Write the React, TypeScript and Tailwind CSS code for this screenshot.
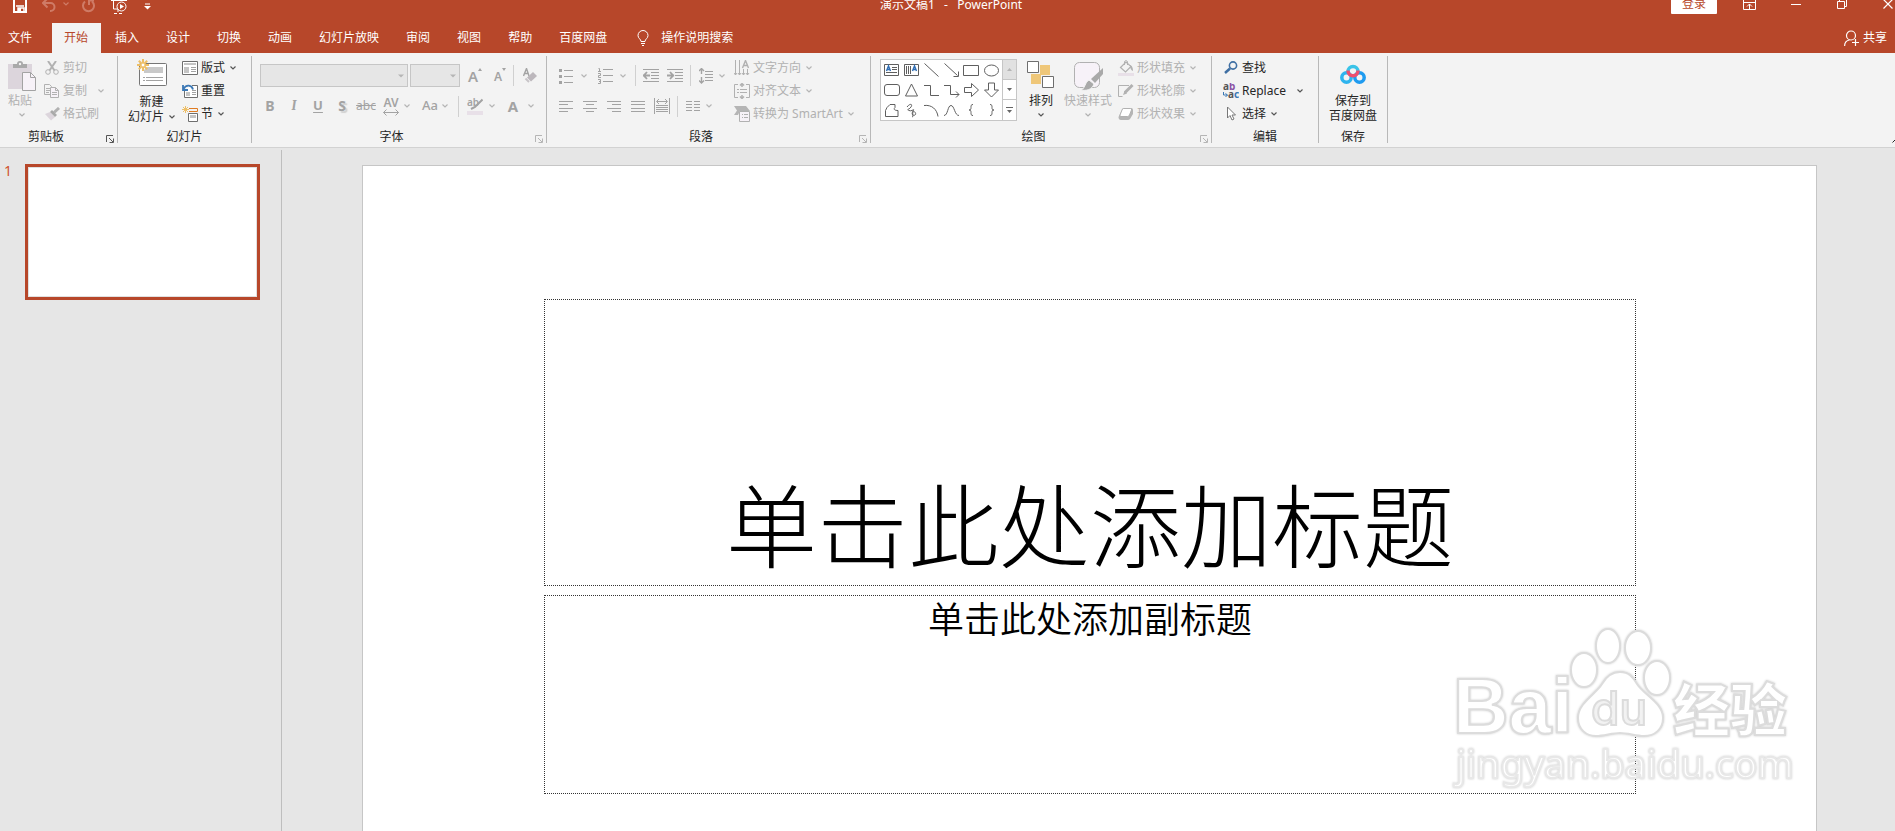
import type {ReactNode} from "react";
import clsx from "clsx";

const TABS = ["插入", "设计", "切换", "动画", "幻灯片放映", "审阅", "视图", "帮助", "百度网盘"];

type IconProps = {
  w: number;
  h: number;
  children: ReactNode;
  className?: string;
};

function Icon({w, h, children, className}: IconProps) {
  return (
    <svg
      width={w}
      height={h}
      viewBox={`0 0 ${w} ${h}`}
      fill="none"
      stroke="currentColor"
      aria-hidden="true"
      className={clsx("block shrink-0", className)}
    >
      {children}
    </svg>
  );
}

function Chevron({className}: {className?: string}) {
  return (
    <Icon w={6} h={4} className={className}>
      <path d="M.5 .5 3 3 5.5 .5" strokeWidth="1.2" />
    </Icon>
  );
}

function Divider({className}: {className?: string}) {
  return <span className={clsx("h-[21px] w-px shrink-0 bg-[#d0d0d0]", className)} />;
}

type GroupProps = {
  label: string;
  className: string;
  labelClassName?: string;
  launcher?: "on" | "off";
  children: ReactNode;
};

function Group({label, className, labelClassName, launcher, children}: GroupProps) {
  return (
    <section aria-label={label} className={clsx("flex shrink-0 flex-col border-r border-[#b8b8b8]", className)}>
      <div className="flex flex-1 items-start">{children}</div>
      <div className="flex h-[13px] items-center">
        <span className={clsx("flex-1 text-center leading-[13px]", labelClassName)}>{label}</span>
        {launcher ? (
          <button
            type="button"
            aria-label={`${label}设置`}
            disabled={launcher === "off"}
            className={clsx("w-[11px] pt-1", launcher === "on" ? "text-[#555]" : "text-[#b5b5b5]")}
          >
            <Icon w={8} h={8}>
              <path d="M.5 7V.5H7M3 3l4 4M7.5 3.5v4h-4" />
            </Icon>
          </button>
        ) : null}
      </div>
    </section>
  );
}

type RowProps = {
  icon: ReactNode;
  label: string;
  disabled?: boolean;
  chevron?: "near" | "far";
};

function Row({icon, label, disabled, chevron}: RowProps) {
  return (
    <button
      type="button"
      disabled={disabled}
      className="flex h-[23px] items-center gap-[3px] whitespace-nowrap disabled:text-[#b1b1b1]"
    >
      <span className="flex w-4 justify-center">{icon}</span>
      <span>{label}</span>
      {chevron ? (
        <Chevron className={clsx(chevron === "far" ? "ml-2" : "ml-0.5", disabled ? "text-[#b5b5b5]" : "text-[#555]")} />
      ) : null}
    </button>
  );
}

type ToolProps = {
  label: string;
  className?: string;
  children: ReactNode;
};

function Tool({label, className, children}: ToolProps) {
  return (
    <button
      type="button"
      disabled
      aria-label={label}
      className={clsx("flex h-[22px] shrink-0 items-center justify-center text-[#a3a3a3]", className)}
    >
      {children}
    </button>
  );
}

function ComboBox({label, className}: {label: string; className: string}) {
  return (
    <div className={clsx("relative", className)}>
      <select
        disabled
        aria-label={label}
        className="block h-[23px] w-full appearance-none border border-[#c6c6c6] bg-[#e6e6e6]"
      />
      <Icon w={6} h={4} className="absolute top-2.5 right-1 text-[#b5b5b5]">
        <path d="M0 .5h6L3 3.5z" fill="currentColor" stroke="none" />
      </Icon>
    </div>
  );
}

function TitleBar() {
  return (
    <header className="-mt-3 mb-[3px] flex h-8 items-center justify-between text-white">
      <div className="flex flex-1 items-center pl-[13px]">
        <button type="button" aria-label="保存">
          <Icon w={14} h={18}>
            <path d="M1 3h12v14H1z" strokeWidth="2" />
            <path d="M3 11h8M5 17v-4h6v4" strokeWidth="1.5" />
            <path d="M5 13h3v4H5z" fill="currentColor" stroke="none" />
          </Icon>
        </button>
        <button type="button" aria-label="撤消" disabled className="ml-[15px] flex items-center text-[#cf7b66]">
          <Icon w={14} h={18}>
            <path d="M1 8h7.500a4 4 0 0 1 0 8H8M5.500 3.500 1 8l4.500 4.500" strokeWidth="2" />
          </Icon>
          <Chevron className="ml-[7px]" />
        </button>
        <button type="button" aria-label="恢复" disabled className="ml-[12px] text-[#cf7b66]">
          <Icon w={14} h={18}>
            <path d="M11 6.500a5.500 5.500 0 1 1-7 0M8 10V5.500h5" strokeWidth="2" />
          </Icon>
        </button>
        <button type="button" aria-label="从头开始" className="ml-4">
          <Icon w={16} h={20}>
            <path d="M0 6.500h16M2.500 6v9H7M7 15v3M3 19.500h3M8 19.500h3" />
            <circle cx="10.500" cy="12.500" r="4.500" />
            <path d="M9 10v5l4-2.500z" fill="currentColor" stroke="none" />
          </Icon>
        </button>
        <button type="button" aria-label="自定义快速访问工具栏" className="ml-[17px] pt-1">
          <Icon w={7} h={7}>
            <path d="M1 1h5" />
            <path d="M0 3h7L3.500 6.500z" fill="currentColor" stroke="none" />
          </Icon>
        </button>
      </div>
      <h1 className="pt-0.5 pr-1.5 leading-4 whitespace-pre">演示文稿1   -   PowerPoint</h1>
      <div className="flex flex-1 items-center justify-end">
        <button type="button" className="h-5 w-[46px] rounded-[1px] bg-white text-[#b7472a]">
          登录
        </button>
        <button type="button" aria-label="功能区显示选项" className="ml-[26px]">
          <Icon w={13} h={12}>
            <path d="M.5 1.500h12v10H.5zM.5 4.500h12M6.500 11V6M4 8.500l2.500-2.500L9 8.500" />
          </Icon>
        </button>
        <button type="button" aria-label="最小化" className="ml-[35px]">
          <Icon w={10} h={10}>
            <path d="M0 5.500h10" />
          </Icon>
        </button>
        <button type="button" aria-label="向下还原" className="ml-9">
          <Icon w={10} h={10}>
            <path d="M.5 2.500h7v7h-7zM2.500 2.500v-2h7v7h-2" />
          </Icon>
        </button>
        <button type="button" aria-label="关闭" className="mr-0.5 ml-9">
          <Icon w={10} h={10}>
            <path d="m.5.5 9 9M9.500.5l-9 9" strokeWidth="1.200" />
          </Icon>
        </button>
      </div>
    </header>
  );
}

function TabBar() {
  return (
    <nav className="flex h-[30px] items-stretch text-white">
      <button type="button" className="w-[52px] pl-2 text-left">
        文件
      </button>
      <div className="flex gap-px">
        <button type="button" aria-current="page" className="bg-[#f3f3f3] pr-[13px] pl-3 text-[#b7472a]">
          开始
        </button>
        {TABS.map((tab) => (
          <button key={tab} type="button" className="px-[13px]">
            {tab}
          </button>
        ))}
      </div>
      <button type="button" className="ml-[17px] flex items-center gap-3">
        <Icon w={12} h={16}>
          <path d="M4 11.500C4 9 1 8.500 1 5.500a5 5 0 0 1 10 0C11 8.500 8 9 8 11.500zM4 13.500h4M5 15.500h2" />
        </Icon>
        操作说明搜索
      </button>
      <button type="button" className="mr-2 ml-auto flex items-center gap-1">
        <Icon w={15} h={16}>
          <circle cx="7" cy="5.500" r="4.500" strokeWidth="1.200" />
          <path d="M.6 16c0-3 2-5.500 5-6" strokeWidth="1.200" />
          <path d="M8 12.500h7M11.500 9v7" strokeWidth="1.200" />
        </Icon>
        共享
      </button>
    </nav>
  );
}

function ClipboardGroup() {
  return (
    <Group label="剪贴板" className="w-[118px]" labelClassName="pr-3.5" launcher="on">
      <button type="button" disabled className="flex w-11 flex-col items-start pt-[5px] pl-2 text-[#b1b1b1]">
        <Icon w={28} h={30}>
          <path d="M0 3h24v25H0z" fill="#dcd5dc" stroke="none" />
          <path d="M5 7V3h4a3 3 0 0 1 6 0h4v4z" fill="#a9a9a9" stroke="none" />
          <circle cx="12" cy="3" r="1.200" fill="#f3f3f3" stroke="none" />
          <path d="M14.500 11.500h8l5 5v13h-13z" fill="#f7f2f8" stroke="#a3a3a3" />
          <path d="M22.500 11.500v5h5" stroke="#a3a3a3" />
        </Icon>
        <span className="mt-0.5 leading-4">粘贴</span>
        <Chevron className="mt-1 ml-[11px]" />
      </button>
      <div>
        <Row
          disabled
          label="剪切"
          icon={
            <Icon w={14} h={14}>
              <path d="M3 0l6.500 9.500M11 0 4.500 9.500" strokeWidth="2" />
              <circle cx="3" cy="11" r="2.300" />
              <circle cx="11" cy="11" r="2.300" />
            </Icon>
          }
        />
        <Row
          disabled
          label="复制"
          chevron="far"
          icon={
            <Icon w={16} h={14}>
              <path d="M.5.5h5l2 2v8h-7zM2 4.500h4M2 6.500h4M2 8.500h3" />
              <path d="M6.500 3.500h5l3 3v7h-8z" fill="#f7f2f8" />
              <path d="M11.500 3.500v3h3M8 8.500h5M8 10.500h5" />
            </Icon>
          }
        />
        <Row
          disabled
          label="格式刷"
          icon={
            <Icon w={15} h={14}>
              <path d="M0 7l5-2 5 5-4 3.500z" fill="#dcd5dc" stroke="none" />
              <path d="M5 5l2-2 5 5-2 2z" fill="#a9a9a9" stroke="none" />
              <path d="M9 5.500 14 1" strokeWidth="3" />
            </Icon>
          }
        />
      </div>
    </Group>
  );
}

function SlidesGroup() {
  return (
    <Group label="幻灯片" className="w-[134px]">
      <button type="button" className="ml-2.5 flex flex-col items-center pt-[3px]">
        <Icon w={30} h={28}>
          <rect x="2.500" y="4.500" width="27" height="22" rx="1" fill="#fff" stroke="#767676" />
          <path d="M10 8h16v6H7v-3z" fill="#c9c9c9" stroke="none" />
          <path d="M6 18.500h2M9 18.500h17M6 21.500h2M9 21.500h17" stroke="#a3a3a3" />
          <path
            d="M6 0v12M0 6h12M1.800 1.800l8.400 8.400M10.200 1.800l-8.400 8.400"
            stroke="#eebf66"
            strokeWidth="2"
          />
          <circle cx="6" cy="6" r="2" fill="#fff" stroke="#eebf66" />
        </Icon>
        <span className="mt-[7px] leading-[15px]">新建</span>
        <span className="flex items-center gap-[5px] leading-[15px]">
          幻灯片
          <Chevron className="text-[#555]" />
        </span>
      </button>
      <div className="ml-[7px]">
        <Row
          label="版式"
          chevron="near"
          icon={
            <Icon w={16} h={14}>
              <path d="M.5.5h15v13H.5z" fill="#fff" stroke="#6e6e6e" />
              <path d="M2 2h12v2H2zM2 6h5v6H2z" fill="#c4c4c4" stroke="none" />
              <path d="M9 6.500h5M9 8.500h5M9 10.500h5" stroke="#a3a3a3" />
            </Icon>
          }
        />
        <Row
          label="重置"
          icon={
            <Icon w={16} h={14}>
              <path d="M2.500 6v7.500h13v-12H10" fill="#fff" stroke="#6e6e6e" />
              <path d="M4 8h4v4H4z" fill="#c4c4c4" stroke="none" />
              <path d="M10 6.500h4M10 8.500h4M10 10.500h4" stroke="#a3a3a3" />
              <path d="M11 5.500C10 1 4 0 1.500 5M1 1v5h5" stroke="#3b78b5" strokeWidth="1.800" />
            </Icon>
          }
        />
        <Row
          label="节"
          chevron="near"
          icon={
            <Icon w={16} h={16}>
              <path d="M7 2.500h8.500v3H7" stroke="#e07b20" />
              <path d="M6.500 7.500h9v8h-9z" fill="#fff" stroke="#6e6e6e" />
              <path d="M8 9h6v3H8z" fill="#c4c4c4" stroke="none" />
              <path d="M3.500 0v7M0 3.500h7M1 1l5 5M6 1 1 6" stroke="#eebf66" />
            </Icon>
          }
        />
      </div>
    </Group>
  );
}

function FontGroup() {
  return (
    <Group label="字体" className="w-[295px]" labelClassName="pr-1" launcher="off">
      <div className="pt-2 pl-1.5">
        <div className="flex items-center">
          <ComboBox label="字体名称" className="ml-0.5 w-[148px]" />
          <ComboBox label="字号" className="ml-0.5 w-[50px]" />
          <Tool label="增大字号" className="ml-2">
            <span className="text-[15px] leading-4 font-semibold">A</span>
            <Icon w={4} h={16}>
              <path d="M0 3 2 0l2 3z" fill="currentColor" stroke="none" />
            </Icon>
          </Tool>
          <Tool label="减小字号" className="ml-3">
            <span className="pt-0.5 leading-4 font-semibold">A</span>
            <Icon w={4} h={16}>
              <path d="M0 0h4L2 3z" fill="currentColor" stroke="none" />
            </Icon>
          </Tool>
          <Divider className="ml-[7px]" />
          <Tool label="清除格式" className="ml-[9px]">
            <Icon w={14} h={15}>
              <path d="M.5 8 3.500.5 6 8M1.500 5.500h4" strokeWidth="1.400" />
              <path d="M4 9.500 10 4l4 4-6 5.500z" fill="#bcb7bc" stroke="none" />
              <path d="M2.500 10.500 6 14" stroke="#c8c4c8" strokeWidth="2" />
            </Icon>
          </Tool>
        </div>
        <div className="mt-2 flex items-center">
          <Tool label="加粗" className="w-6 text-sm font-bold">
            B
          </Tool>
          <Tool label="倾斜" className="w-6 font-serif text-sm font-bold italic">
            I
          </Tool>
          <Tool label="下划线" className="w-6 text-[13px] font-bold underline underline-offset-2">
            U
          </Tool>
          <Tool label="文字阴影" className="w-6 text-sm font-bold text-shadow-[2px_2px_1px_#d0d0d0]">
            S
          </Tool>
          <Tool label="删除线" className="w-6 line-through">
            abc
          </Tool>
          <Tool label="字符间距" className="w-[26px] flex-col">
            <span className="leading-3 font-semibold">AV</span>
            <Icon w={16} h={7}>
              <path d="M.5 3.500h15M3.500.5l-3 3 3 3M12.500.5l3 3-3 3" />
            </Icon>
          </Tool>
          <Chevron className="text-[#b5b5b5]" />
          <Tool label="更改大小写" className="ml-2 w-6 text-[13px] font-medium">
            Aa
          </Tool>
          <Chevron className="text-[#b5b5b5]" />
          <Divider className="ml-2.5" />
          <Tool label="文本突出显示颜色" className="ml-2">
            <Icon w={16} h={17}>
              <text x="0" y="8" fontSize="10" fontWeight="600" fill="currentColor" stroke="none">
                ab
              </text>
              <path d="M15.500 1.500 8 9l-4 2" strokeWidth="2" />
              <path d="M0 13h16v4H0z" fill="#e8e0e8" stroke="none" />
            </Icon>
          </Tool>
          <Chevron className="ml-1.5 text-[#b5b5b5]" />
          <Tool label="字体颜色" className="ml-3 w-3 text-[15px] font-bold">
            A
          </Tool>
          <Chevron className="ml-[9px] text-[#b5b5b5]" />
        </div>
      </div>
    </Group>
  );
}

function ParagraphGroup() {
  return (
    <Group label="段落" className="w-[324px]" labelClassName="pr-1" launcher="off">
      <div className="ml-3 w-[166px] shrink-0 pt-2">
        <div className="flex h-[23px] items-center">
          <Tool label="项目符号">
            <Icon w={14} h={16}>
              <path d="M5 2.500h9M5 8.500h9M5 14.500h9" />
              <path d="M0 1h3v3H0zM0 7h3v3H0zM0 13h3v3H0z" fill="currentColor" stroke="none" />
            </Icon>
          </Tool>
          <Chevron className="ml-2 text-[#b5b5b5]" />
          <Tool label="编号" className="ml-[11px]">
            <Icon w={15} h={17}>
              <path d="M5 2.500h10M5 8.500h10M5 14.500h10" />
              <path d="M.5 1.500h1v3M0 4.500h3M0 6.500h2.500v2h-2v2H3M0 12.500h2.500v4H0M1 14.500h1" />
            </Icon>
          </Tool>
          <Chevron className="ml-[7px] text-[#b5b5b5]" />
          <Divider className="ml-[9px]" />
          <Tool label="降低列表级别" className="ml-[7px]">
            <Icon w={16} h={14}>
              <path d="M0 .5h16M8 3.500h8M8 6.500h8M8 9.500h8M0 12.500h16" />
              <path d="M0 6.500h7M4 3 .8 6.500 4 10" strokeWidth="1.800" />
            </Icon>
          </Tool>
          <Tool label="提高列表级别" className="ml-2">
            <Icon w={16} h={14}>
              <path d="M0 .5h16M8 3.500h8M8 6.500h8M8 9.500h8M0 12.500h16" />
              <path d="M0 6.500h7M3 3l3.200 3.500L3 10" strokeWidth="1.800" />
            </Icon>
          </Tool>
          <Divider className="ml-[7px]" />
          <Tool label="行距" className="ml-2">
            <Icon w={14} h={16}>
              <path d="M6 3.500h8M6 6.500h8M6 9.500h8M6 12.500h8" />
              <path d="M2.500 0v6M0 3 2.500.5 5 3M2.500 9v6M0 12.500 2.500 15 5 12.500" strokeWidth="1.400" />
            </Icon>
          </Tool>
          <Chevron className="ml-1.5 text-[#b5b5b5]" />
        </div>
        <div className="mt-2 flex items-center">
          <Tool label="左对齐">
            <Icon w={14} h={11}>
              <path d="M0 .5h14M0 3.500h9M0 7.500h14M0 10.500h9" />
            </Icon>
          </Tool>
          <Tool label="居中" className="ml-2.5">
            <Icon w={14} h={11}>
              <path d="M0 .5h14M3 3.500h8M0 7.500h14M3 10.500h8" />
            </Icon>
          </Tool>
          <Tool label="右对齐" className="ml-2.5">
            <Icon w={14} h={11}>
              <path d="M0 .5h14M5 3.500h9M0 7.500h14M5 10.500h9" />
            </Icon>
          </Tool>
          <Tool label="两端对齐" className="ml-2.5">
            <Icon w={14} h={11}>
              <path d="M0 .5h14M0 3.500h14M0 7.500h14M0 10.500h14" />
            </Icon>
          </Tool>
          <Tool label="分散对齐" className="ml-[9px]">
            <Icon w={16} h={16}>
              <path d="M.5 0v16M15.500 0v16M3 3.500h10M5 1 2.500 3.500 5 6M11 1l2.500 2.500L11 6" />
              <path d="M2 7.500h12M2 9.500h12M2 11.500h12M2 13.500h12" />
            </Icon>
          </Tool>
          <Divider className="ml-[7px]" />
          <Tool label="分栏" className="ml-2">
            <Icon w={14} h={11}>
              <path d="M0 .5h6M8 .5h6M0 3.500h6M8 3.500h6M0 6.500h6M8 6.500h6M0 9.500h6M8 9.500h6" />
            </Icon>
          </Tool>
          <Chevron className="ml-1.5 text-[#b5b5b5]" />
        </div>
      </div>
      <div className="ml-[9px]">
        <Row
          disabled
          label="文字方向"
          chevron="near"
          icon={
            <Icon w={16} h={16}>
              <path d="M1.500 0v15M5.500 0v15M9.500 9v6M13.500 9v6M0 13l1.500 2L3 13M4 13l1.500 2L7 13M8 13l1.500 2 1.500-2M12 13l1.500 2 1.500-2" />
              <path d="M8.500 8 11.500.5l3 7.500M9.500 5.500h4" strokeWidth="1.400" />
            </Icon>
          }
        />
        <Row
          disabled
          label="对齐文本"
          chevron="near"
          icon={
            <Icon w={16} h={16}>
              <path d="M4 1.500H.5v13H4M12 1.500h3.500v13H12M3 6.500h2M6 6.500h7M3 9.500h2M6 9.500h7" />
              <path d="M8 0v4M6 2.500 8 .5l2 2M8 12v4M6 13.500l2 2 2-2" strokeWidth="1.500" />
            </Icon>
          }
        />
        <Row
          disabled
          label="转换为 SmartArt"
          chevron="near"
          icon={
            <Icon w={16} h={16}>
              <path d="M0 0h12l4 5H6l-2 4H0l3-4.500z" fill="#b5b5b5" stroke="none" />
              <path d="M5.500 5.500h10v10h-10z" fill="#f7f2f8" />
              <path d="M8 8.500h1M10 8.500h4M8 11.500h1M10 11.500h4" />
            </Icon>
          }
        />
      </div>
    </Group>
  );
}

const SHAPES: {name: string; draw: ReactNode}[] = [
  {
    name: "文本框",
    draw: (
      <>
        <path d="M.5 1.500h14v11H.5zM8 4.500h5M8 6.500h5M2 9.500h11" />
        <path d="M2.500 8 4.500 3l2 5M3 6.500h3" stroke="#2f6eb5" strokeWidth="1.400" />
      </>
    ),
  },
  {
    name: "竖排文本框",
    draw: (
      <>
        <path d="M.5 1.500h14v11H.5zM2.500 3v8M4.500 3v8M6.500 3v8" />
        <path d="M8.500 8l2-5 2 5M9 6.500h3" stroke="#2f6eb5" strokeWidth="1.400" />
      </>
    ),
  },
  {name: "直线", draw: <path d="M.5.5l14 13" />},
  {name: "箭头", draw: <path d="M.5.5l13 12M14.500 8.500v5h-5" />},
  {name: "矩形", draw: <path d="M-.5 2.500h15v10h-15z" />},
  {name: "椭圆", draw: <ellipse cx="7.500" cy="7.500" rx="7" ry="5.500" />},
  {name: "圆角矩形", draw: <rect x=".5" y="1.500" width="15" height="11" rx="2.500" />},
  {name: "三角形", draw: <path d="M7.500 1 1.500 13h12z" />},
  {name: "肘形连接符", draw: <path d="M0 2.500h6.500v10H15" />},
  {name: "肘形箭头", draw: <path d="M0 2.500h6.500v9H15M12 8.500l3 3-3 3" />},
  {name: "右箭头", draw: <path d="M.5 4.500h7v-4l7 6.500-7 6.500v-4h-7z" />},
  {name: "下箭头", draw: <path d="M4.500 0h6v7h4l-7 7-7-7h4z" />},
  {name: "任意多边形", draw: <path d="M3 4.500 6 1.500h5v3c-2 2 0 3 3 3v6H1.500v-6z" />},
  {
    name: "自由曲线",
    draw: <path d="M3 4c3-4 6-3 4 0S2 6 5 7.500s6-3 4 .5 0 5 2 4-1-5-2-3 1 5-1 5" />,
  },
  {name: "弧形", draw: <path d="M0 2.500c8-1 13 4 14 11" />},
  {name: "曲线", draw: <path d="M0 12.500c4 0 3.500-10 7-10s3.500 10 8 10" />},
  {name: "左大括号", draw: <path d="M9 1.500c-2 0-2 1-2 3s-.5 2.500-2 2.500c1.500 0 2 .5 2 2.500s0 3 2 3" />},
  {name: "右大括号", draw: <path d="M6 1.500c2 0 2 1 2 3S8.500 7 10 7c-1.500 0-2 .5-2 2.500s0 3-2 3" />},
];

function DrawingGroup() {
  return (
    <Group label="绘图" className="w-[341px]" labelClassName="pr-1" launcher="off">
      <div className="mt-[3px] ml-[9px] flex h-[62px] w-[137px] shrink-0 border border-[#c6c6c6] bg-white">
        <div className="grid flex-1 grid-cols-6 text-[#5f5f5f]">
          {SHAPES.map((shape) => (
            <button key={shape.name} type="button" aria-label={shape.name} className="flex items-center justify-center">
              <Icon w={15} h={14} className="overflow-visible">
                {shape.draw}
              </Icon>
            </button>
          ))}
        </div>
        <div className="grid w-3.5 grid-rows-3 divide-y divide-[#c6c6c6] border-l border-[#c6c6c6] text-[#666]">
          <button
            type="button"
            aria-label="上一行"
            disabled
            className="flex items-center justify-center bg-[#e1e1e1] text-[#b5b5b5]"
          >
            <Icon w={5} h={3}>
              <path d="M0 3h5L2.500 0z" fill="currentColor" stroke="none" />
            </Icon>
          </button>
          <button type="button" aria-label="下一行" className="flex items-center justify-center">
            <Icon w={5} h={3}>
              <path d="M0 0h5L2.500 3z" fill="currentColor" stroke="none" />
            </Icon>
          </button>
          <button type="button" aria-label="其他形状" className="flex items-center justify-center">
            <Icon w={7} h={7}>
              <path d="M0 .5h7" />
              <path d="M1 3h5L3.500 6z" fill="currentColor" stroke="none" />
            </Icon>
          </button>
        </div>
      </div>
      <button type="button" className="ml-2.5 flex w-7 flex-col items-center pt-[5px]">
        <Icon w={28} h={28}>
          <path d="M13 4h10v10H13zM4 13h10v10H4z" fill="#efc779" stroke="none" />
          <path d="M.5.5h11v11H.5zM15.500 15.500h11v11h-11z" fill="#fff" stroke="#6e6e6e" />
        </Icon>
        <span className="mt-1 leading-4">排列</span>
        <Chevron className="mt-1 text-[#555]" />
      </button>
      <button type="button" disabled className="ml-[9px] flex w-12 shrink-0 flex-col items-center pt-[5px] text-[#b1b1b1]">
        <Icon w={30} h={30}>
          <rect x="1.500" y="1.500" width="25" height="25" rx="5" fill="#f7f2f8" />
          <path d="M30 7v6l-8 9-4-4z" fill="#a9a9a9" stroke="none" />
          <path d="M16 19l5 4c-2 6-8 7-13 6 4-1 4-8 8-10z" fill="#a9a9a9" stroke="#f3f3f3" />
        </Icon>
        <span className="mt-0.5 leading-4">快速样式</span>
        <Chevron className="mt-1" />
      </button>
      <div className="ml-1.5">
        <Row
          disabled
          label="形状填充"
          chevron="near"
          icon={
            <Icon w={16} h={16}>
              <path d="M2.500 7.500 8 2l5 4.500-5.500 5.500z" strokeWidth="1.200" />
              <path d="M6.500 5V1.500q1.500-2 3 0V5" />
              <path d="M12 5q3 1 3 6-3-1-3-6z" fill="currentColor" stroke="none" />
              <path d="M0 13h16v3H0z" fill="#e8e0e8" stroke="none" />
            </Icon>
          }
        />
        <Row
          disabled
          label="形状轮廓"
          chevron="near"
          icon={
            <Icon w={16} h={16}>
              <path d="M11 2.500H.5v11h4" />
              <path d="M14.500 2 7 9.500" strokeWidth="3" />
              <path d="M6.500 8 5 12l4-1.500z" fill="currentColor" stroke="none" />
            </Icon>
          }
        />
        <Row
          disabled
          label="形状效果"
          chevron="near"
          icon={
            <Icon w={16} h={14}>
              <path d="M5 1h8q2 0 2 2v4l-3 5q-1 1-2 1H3q-2.500 0-2.500-3z" fill="#b5b5b5" stroke="none" />
              <path
                d="M5.500 1.500h7q1.500 0 1 1.500l-2 5q-.5 1.500-2 1.500H3q-1.500 0-1-1.500l2-5q.5-1.500 1.500-1.500z"
                fill="#fff"
              />
            </Icon>
          }
        />
      </div>
    </Group>
  );
}

function EditGroup() {
  return (
    <Group label="编辑" className="w-[107px]">
      <div className="pl-[11px]">
        <Row
          label="查找"
          icon={
            <Icon w={14} h={13}>
              <circle cx="9" cy="4.500" r="3.600" stroke="#3f6fa3" strokeWidth="1.600" />
              <path d="M6 7.500 1 12" stroke="#3f6fa3" strokeWidth="2.500" />
            </Icon>
          }
        />
        <Row
          label="Replace"
          chevron="far"
          icon={
            <Icon w={16} h={16}>
              <text fontSize="10" fontWeight="700" stroke="none">
                <tspan x="0" y="7" fill="#555">
                  a
                </tspan>
                <tspan fill="#8b53a5">b</tspan>
                <tspan x="5" y="15" fill="#555">
                  a
                </tspan>
                <tspan fill="#3b78b5">c</tspan>
              </text>
              <path d="M.5 9v3h4M2.500 10.500l2 1.500-2 2" stroke="#3b78b5" />
            </Icon>
          }
        />
        <Row
          label="选择"
          chevron="near"
          icon={
            <Icon w={9} h={15}>
              <path d="M.5 1v11l2.500-2.500L5 14l2-1-2-4h3.500z" fill="#fff" stroke="#777" />
            </Icon>
          }
        />
      </div>
    </Group>
  );
}

function CloudGroup() {
  return (
    <Group label="保存" className="w-[69px]">
      <button type="button" className="flex flex-1 flex-col items-center pt-[7px]">
        <Icon w={26} h={21}>
          <path d="M8 8.500a5 5 0 1 1 10 0" stroke="#3ac3e8" strokeWidth="3.500" />
          <circle cx="6.500" cy="14.500" r="4.700" stroke="#2fb4ee" strokeWidth="3.500" />
          <circle cx="19.500" cy="14.500" r="4.700" stroke="#1e9bf0" strokeWidth="3.500" />
          <path d="M8 7.500c0 7 10 7 10 0" stroke="#ef4f6e" strokeWidth="3.500" />
        </Icon>
        <span className="mt-[9px] leading-[15px]">保存到</span>
        <span className="leading-[15px]">百度网盘</span>
      </button>
    </Group>
  );
}

function Watermark() {
  return (
    <svg
      width="352"
      height="180"
      viewBox="0 0 352 180"
      role="img"
      aria-label="Baidu 经验 jingyan.baidu.com"
      className="absolute top-[454px] right-[16px] drop-shadow-[0_0_1px_#ccc]"
      stroke="#dcdcdc"
      strokeWidth="2"
      fill="#fff"
    >
      <text x="5" y="113" fontSize="77" className="font-['Liberation_Sans',sans-serif] font-bold">
        Bai
      </text>
      <ellipse cx="136" cy="50" rx="13" ry="17" />
      <ellipse cx="160" cy="26" rx="12" ry="17" />
      <ellipse cx="190" cy="28" rx="13" ry="17" />
      <ellipse cx="209" cy="58" rx="13" ry="17" />
      <path d="M172 52c-9 0-14 5-18 12-6 10-24 19-24 34 0 11 8 18 18 18 8 0 16-3 24-3s16 3 24 3c11 0 19-7 19-18 0-15-19-23-26-34-4-7-8-12-17-12z" />
      <text x="143" y="105" fontSize="46" fill="#f2f2f2" className="font-['Inter',sans-serif] font-medium">
        du
      </text>
      <text x="225" y="111" fontSize="57" className="font-['Noto_Sans_CJK_SC',sans-serif] font-black">
        经验
      </text>
      <text x="8" y="158" fontSize="39" stroke="#e8e8e8" className="font-['Noto_Sans',sans-serif]">
        jingyan.baidu.com
      </text>
    </svg>
  );
}

export default function App() {
  return (
    <div className="flex h-screen flex-col overflow-hidden bg-[#e6e6e6] font-['Noto_Sans','Noto_Sans_CJK_SC',sans-serif] text-xs text-[#262626]">
      <div className="bg-[#b7472a]">
        <TitleBar />
        <TabBar />
      </div>
      <div className="flex h-[95px] shrink-0 border-b border-[#d2d2d2] bg-[#f3f3f3] pt-[3px] pb-1">
        <ClipboardGroup />
        <SlidesGroup />
        <FontGroup />
        <ParagraphGroup />
        <DrawingGroup />
        <EditGroup />
        <CloudGroup />
        <button type="button" aria-label="折叠功能区" className="ml-auto w-[3px] self-end overflow-hidden">
          <Icon w={6} h={4}>
            <path d="M.5 3.500 3 1l2.500 2.500" />
          </Icon>
        </button>
      </div>
      <div className="flex min-h-0 flex-1 pt-0.5">
        <aside className="flex w-[282px] shrink-0 items-start border-r border-[#bebebe] pt-3.5 pl-1">
          <span className="w-[21px] text-sm leading-3.5 text-[#d0512f]">1</span>
          <button
            type="button"
            aria-label="幻灯片 1"
            className="h-[136px] w-[235px] border-3 border-[#b7472a] bg-white inset-ring inset-ring-[#e0e0e0]"
          />
        </aside>
        <main className="min-w-0 flex-1 pt-[15px] pr-[78px] pl-20">
          <div className="relative aspect-video border border-[#c6c6c6] bg-white pt-[133px] pr-[180px] pl-[181px]">
            <h2 className="flex h-[287px] items-end justify-center border border-dotted border-[#333] pb-2.5 font-['Noto_Sans_CJK_SC',sans-serif] text-[91px] leading-[108px] font-light text-black">
              单击此处添加标题
            </h2>
            <p className="mt-[9px] h-[199px] border border-dotted border-[#333] text-center font-['Noto_Sans_CJK_SC',sans-serif] text-4xl leading-[43px] font-[350] text-black">
              单击此处添加副标题
            </p>
            <Watermark />
          </div>
        </main>
      </div>
    </div>
  );
}
